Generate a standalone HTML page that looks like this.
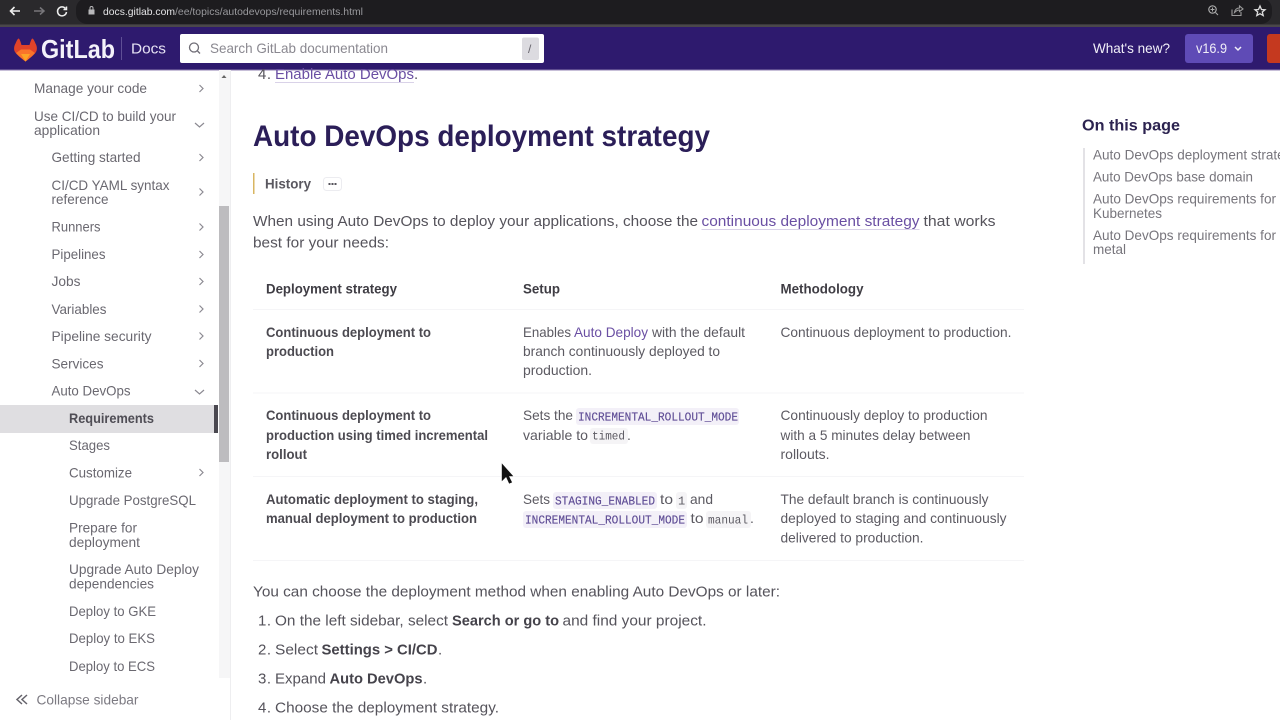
<!DOCTYPE html>
<html><head><meta charset="utf-8"><title>Auto DevOps requirements</title>
<style>
html,body{margin:0;padding:0;width:1280px;height:720px;overflow:hidden;background:#fff}
svg{display:block;filter:blur(.25px)}
text{font-family:"Liberation Sans",sans-serif;font-size:14px;fill:#5c5a62}
.s{font-size:14px;fill:#6a6870}
.b{font-size:15px;fill:#55535b}
.t{font-size:14px;fill:#5c5a62}
.th{font-size:14px;font-weight:bold;fill:#3f3d44}
.tb{font-size:14px;font-weight:bold;fill:#4c4a51}
.l{fill:#6a4fa3}
.c{font-family:"Liberation Mono",monospace;font-size:12px;fill:#5f4d96;stroke:#5f4d96;stroke-width:.15}
.g{font-family:"Liberation Mono",monospace;font-size:12px;fill:#5c5a62}
.toc{font-size:13.6px;fill:#77757c}
.ch{fill:none;stroke:#8c8a92;stroke-width:1.2}
</style></head><body>
<svg width="1280" height="720" viewBox="0 0 1280 720" xmlns="http://www.w3.org/2000/svg">
<rect width="1280" height="720" fill="#fff"/>
<!-- browser bar -->
<rect width="1280" height="27" fill="#2a292c"/>
<rect x="76" y="-2" width="1196" height="26" rx="11" fill="#1d1c1f"/>
<rect y="24.500" width="1280" height="2.500" fill="#4a474a"/>
<path d="M20 11H11M14.500 7L10.500 11L14.500 15" fill="none" stroke="#eee" stroke-width="1.600"/>
<path d="M34 11H44M40 7.500L44 11L40 14.500" fill="none" stroke="#77767a" stroke-width="1.500"/>
<path d="M65.500 8.500A4.500 4.500 0 1 0 66.500 12M66.500 6.500V9.500H63.500" fill="none" stroke="#eee" stroke-width="1.500"/>
<rect x="88.500" y="9.500" width="6" height="5" fill="#b8b8ba"/><path d="M90 9.500V8a1.500 1.500 0 0 1 3 0V9.500" fill="none" stroke="#b8b8ba"/>
<text x="103" y="15" style="font-size:10.500px;fill:#e4e4e6" textLength="72" lengthAdjust="spacingAndGlyphs">docs.gitlab.com</text>
<text x="175" y="15" style="font-size:10.500px;fill:#98989c" textLength="188" lengthAdjust="spacingAndGlyphs">/ee/topics/autodevops/requirements.html</text>
<circle cx="1212.500" cy="9.500" r="3.700" fill="none" stroke="#aaa" stroke-width="1.200"/><path d="M1215.500 12.500L1218 15M1210.500 9.500h4M1212.500 7.500v4" fill="none" stroke="#aaa"/>
<path d="M1232 9.500V15.500H1241V12M1234.500 12.500C1235 9.500 1237 8 1239.500 8V6L1243 9L1239.500 11.500V10C1237.500 10 1236 11 1234.500 12.500Z" fill="none" stroke="#999" stroke-width="1.100"/>
<path d="M1260 6L1261.500 9.500L1265 9.800L1262.300 12L1263.200 15.500L1260 13.700L1256.800 15.500L1257.700 12L1255 9.800L1258.500 9.500Z" fill="none" stroke="#ddd" stroke-width="1.300"/>
<!-- nav -->
<rect y="27" width="1280" height="43" fill="#2e1a6e"/>
<rect y="69.500" width="1280" height="1" fill="#8f7fb0"/>
<path d="M25.500 61.500C21 58 17 55 15 52C13.500 49.500 14 46 15.500 43.500C16.500 41 17.500 39 18.500 38.500C19.500 38.500 20.500 41.500 21.500 45H29.500C30.500 41.500 31.500 38.500 32.500 38.500C33.500 39 34.500 41 35.500 43.500C37 46 37.500 49.500 36 52C34 55 30 58 25.500 61.500Z" fill="#e24329"/>
<path d="M25.500 61.500C21 58 18 55.500 16 53L21 49.500H30L35 53C33 55.500 30 58 25.500 61.500Z" fill="#f9742a"/>
<path d="M25.500 61.500L21 54H30Z" fill="#fca326"/>
<text x="41" y="58" style="font-size:26px;fill:#f4f2fa;font-weight:bold" textLength="74" lengthAdjust="spacingAndGlyphs">GitLab</text>
<rect x="121" y="37" width="1" height="23" fill="#5f4f95"/>
<text x="131" y="53.500" style="font-size:14.500px;fill:#e6e2f4" textLength="35" lengthAdjust="spacingAndGlyphs">Docs</text>
<rect x="180" y="34" width="364" height="29" rx="2" fill="#fff"/>
<circle cx="194" cy="47.500" r="4.500" fill="none" stroke="#6e6c75" stroke-width="1.300"/><path d="M197.500 51L200 53.500" stroke="#6e6c75" stroke-width="1.300"/>
<text x="210" y="53" style="font-size:14px;fill:#8a8890" textLength="178" lengthAdjust="spacingAndGlyphs">Search GitLab documentation</text>
<rect x="522" y="37.500" width="17" height="22.500" rx="2" fill="#dcdbe0"/>
<text x="528" y="53" style="font-size:12px;fill:#66646c">/</text>
<text x="1093" y="53" style="font-size:14px;fill:#f1eff8" textLength="77" lengthAdjust="spacingAndGlyphs">What's new?</text>
<rect x="1185" y="34" width="68" height="29" rx="3" fill="#5f4bb6"/>
<text x="1196" y="53" style="font-size:14px;fill:#f1eff8" textLength="31" lengthAdjust="spacingAndGlyphs">v16.9</text>
<path d="M1235 47l3 3 3-3" fill="none" stroke="#f1eff8" stroke-width="1.500"/>
<rect x="1267" y="34" width="20" height="29" rx="3" fill="#c5391f"/>
<!-- sidebar -->
<rect x="230" y="70" width="1" height="650" fill="#eeeef0"/>
<rect x="219" y="70" width="11" height="608" fill="#f6f6f7"/>
<rect x="219" y="206" width="10" height="256" fill="#bdbcbf"/>
<path d="M224 75l-2.500 3h5z" fill="#666"/>
<rect y="405" width="218" height="28" fill="#dfdee1"/>
<rect x="214" y="405" width="4" height="28" fill="#4a4850"/>
<text class="s" x="34" y="93" textLength="113" lengthAdjust="spacingAndGlyphs">Manage your code</text>
<text class="s" x="34" y="121" textLength="142" lengthAdjust="spacingAndGlyphs">Use CI/CD to build your</text>
<text class="s" x="34" y="135" textLength="66" lengthAdjust="spacingAndGlyphs">application</text>
<text class="s" x="51.500" y="162" textLength="89" lengthAdjust="spacingAndGlyphs">Getting started</text>
<text class="s" x="51.500" y="190" textLength="118" lengthAdjust="spacingAndGlyphs">CI/CD YAML syntax</text>
<text class="s" x="51.500" y="204" textLength="57" lengthAdjust="spacingAndGlyphs">reference</text>
<text class="s" x="51.500" y="231.500" textLength="49" lengthAdjust="spacingAndGlyphs">Runners</text>
<text class="s" x="51.500" y="259" textLength="54" lengthAdjust="spacingAndGlyphs">Pipelines</text>
<text class="s" x="51.500" y="286" textLength="29" lengthAdjust="spacingAndGlyphs">Jobs</text>
<text class="s" x="51.500" y="314" textLength="55" lengthAdjust="spacingAndGlyphs">Variables</text>
<text class="s" x="51.500" y="341" textLength="100" lengthAdjust="spacingAndGlyphs">Pipeline security</text>
<text class="s" x="51.500" y="368.500" textLength="52" lengthAdjust="spacingAndGlyphs">Services</text>
<text class="s" x="51.500" y="395.500" textLength="79" lengthAdjust="spacingAndGlyphs">Auto DevOps</text>
<text class="s" x="69" y="423" style="font-weight:bold;fill:#4f4d55" textLength="85" lengthAdjust="spacingAndGlyphs">Requirements</text>
<text class="s" x="69" y="450" textLength="41" lengthAdjust="spacingAndGlyphs">Stages</text>
<text class="s" x="69" y="477.500" textLength="63" lengthAdjust="spacingAndGlyphs">Customize</text>
<text class="s" x="69" y="505" textLength="127" lengthAdjust="spacingAndGlyphs">Upgrade PostgreSQL</text>
<text class="s" x="69" y="532.500" textLength="68" lengthAdjust="spacingAndGlyphs">Prepare for</text>
<text class="s" x="69" y="547" textLength="71" lengthAdjust="spacingAndGlyphs">deployment</text>
<text class="s" x="69" y="574" textLength="130" lengthAdjust="spacingAndGlyphs">Upgrade Auto Deploy</text>
<text class="s" x="69" y="588.500" textLength="85" lengthAdjust="spacingAndGlyphs">dependencies</text>
<text class="s" x="69" y="616" textLength="87" lengthAdjust="spacingAndGlyphs">Deploy to GKE</text>
<text class="s" x="69" y="643" textLength="86" lengthAdjust="spacingAndGlyphs">Deploy to EKS</text>
<text class="s" x="69" y="671" textLength="86" lengthAdjust="spacingAndGlyphs">Deploy to ECS</text>
<path class="ch" d="M199.500 85l3.500 3.500-3.500 3.500M199.500 154l3.500 3.500-3.500 3.500M199.500 188.500l3.500 3.500-3.500 3.500M199.500 223.500l3.500 3.500-3.500 3.500M199.500 251l3.500 3.500-3.500 3.500M199.500 278l3.500 3.500-3.500 3.500M199.500 305.500l3.500 3.500-3.500 3.500M199.500 332.500l3.500 3.500-3.500 3.500M199.500 360l3.500 3.500-3.500 3.500M199.500 469l3.500 3.500-3.500 3.500"/>
<path class="ch" d="M195 123l4.500 4 4.500-4M195 390l4.500 4 4.500-4"/>
<path d="M22 695l-5 4.500 5 4.500M27 695l-5 4.500 5 4.500" fill="none" stroke="#66646c" stroke-width="1.500"/>
<text x="36.500" y="704.500" style="font-size:14px;fill:#7c7a82" textLength="102" lengthAdjust="spacingAndGlyphs">Collapse sidebar</text>
<!-- main -->
<text class="b" x="258" y="79" textLength="13">4.</text>
<text class="b l" x="275" y="79" textLength="139" lengthAdjust="spacingAndGlyphs">Enable Auto DevOps</text>
<rect x="275" y="82" width="139" height="1" fill="#d9d2e8"/>
<text class="b" x="414" y="79">.</text>
<text x="253" y="146" style="font-size:30px;font-weight:bold;fill:#2b1e58" textLength="457" lengthAdjust="spacingAndGlyphs">Auto DevOps deployment strategy</text>
<rect x="253" y="173" width="1.500" height="21" fill="#d8b662"/>
<text x="265" y="188.500" style="font-size:14px;font-weight:bold;fill:#5a5860" textLength="46" lengthAdjust="spacingAndGlyphs">History</text>
<rect x="323.500" y="177.500" width="18" height="13" rx="3" fill="#fff" stroke="#ececf0"/>
<path d="M328.500 184h8" stroke="#55535b" stroke-width="2" stroke-dasharray="2 1"/>
<text class="b" x="253" y="226" textLength="445" lengthAdjust="spacingAndGlyphs">When using Auto DevOps to deploy your applications, choose the</text>
<text class="b l" x="701.500" y="226" textLength="218" lengthAdjust="spacingAndGlyphs">continuous deployment strategy</text>
<rect x="701.500" y="229" width="218" height="1" fill="#d9d2e8"/>
<text class="b" x="923.500" y="226" textLength="72" lengthAdjust="spacingAndGlyphs">that works</text>
<text class="b" x="253" y="247.500" textLength="136" lengthAdjust="spacingAndGlyphs">best for your needs:</text>
<!-- table -->
<path d="M253 309.500H1024M253 393H1024M253 476.500H1024M253 560.500H1024" stroke="#f5f5f7"/>
<text class="th" x="266" y="293.500" textLength="131" lengthAdjust="spacingAndGlyphs">Deployment strategy</text>
<text class="th" x="523" y="293.500" textLength="37" lengthAdjust="spacingAndGlyphs">Setup</text>
<text class="th" x="780.500" y="293.500" textLength="83" lengthAdjust="spacingAndGlyphs">Methodology</text>
<text class="tb" x="266" y="337" textLength="165" lengthAdjust="spacingAndGlyphs">Continuous deployment to</text>
<text class="tb" x="266" y="356" textLength="68" lengthAdjust="spacingAndGlyphs">production</text>
<text class="t" x="523" y="337" textLength="48" lengthAdjust="spacingAndGlyphs">Enables</text>
<text class="t l" x="574" y="337" textLength="74" lengthAdjust="spacingAndGlyphs">Auto Deploy</text>
<text class="t" x="652" y="337" textLength="93" lengthAdjust="spacingAndGlyphs">with the default</text>
<text class="t" x="523" y="356" textLength="197" lengthAdjust="spacingAndGlyphs">branch continuously deployed to</text>
<text class="t" x="523" y="375" textLength="69" lengthAdjust="spacingAndGlyphs">production.</text>
<text class="t" x="780.500" y="337" textLength="231" lengthAdjust="spacingAndGlyphs">Continuous deployment to production.</text>
<text class="tb" x="266" y="420" textLength="165" lengthAdjust="spacingAndGlyphs">Continuous deployment to</text>
<text class="tb" x="266" y="440" textLength="222" lengthAdjust="spacingAndGlyphs">production using timed incremental</text>
<text class="tb" x="266" y="459" textLength="41" lengthAdjust="spacingAndGlyphs">rollout</text>
<text class="t" x="523" y="420" textLength="50" lengthAdjust="spacingAndGlyphs">Sets the</text>
<rect x="576" y="408" width="163" height="17" rx="3" fill="#f3f0f8"/>
<text class="c" x="578" y="420.500" textLength="160" lengthAdjust="spacingAndGlyphs">INCREMENTAL_ROLLOUT_MODE</text>
<text class="t" x="523" y="440" textLength="65" lengthAdjust="spacingAndGlyphs">variable to</text>
<rect x="590" y="428" width="38" height="16" rx="3" fill="#f5f4f6"/>
<text class="g" x="592" y="439.500" textLength="33" lengthAdjust="spacingAndGlyphs">timed</text>
<text class="t" x="627" y="440">.</text>
<text class="t" x="780.500" y="420" textLength="207" lengthAdjust="spacingAndGlyphs">Continuously deploy to production</text>
<text class="t" x="780.500" y="440" textLength="190" lengthAdjust="spacingAndGlyphs">with a 5 minutes delay between</text>
<text class="t" x="780.500" y="459" textLength="49" lengthAdjust="spacingAndGlyphs">rollouts.</text>
<text class="tb" x="266" y="504" textLength="212" lengthAdjust="spacingAndGlyphs">Automatic deployment to staging,</text>
<text class="tb" x="266" y="523" textLength="211" lengthAdjust="spacingAndGlyphs">manual deployment to production</text>
<text class="t" x="523" y="504" textLength="27" lengthAdjust="spacingAndGlyphs">Sets</text>
<rect x="553" y="492" width="104" height="17" rx="3" fill="#f3f0f8"/>
<text class="c" x="555" y="504.500" textLength="100" lengthAdjust="spacingAndGlyphs">STAGING_ENABLED</text>
<text class="t" x="660" y="504" textLength="13" lengthAdjust="spacingAndGlyphs">to</text>
<rect x="676" y="492" width="11" height="17" rx="3" fill="#f5f4f6"/>
<text class="g" x="678" y="504.500">1</text>
<text class="t" x="690" y="504" textLength="23" lengthAdjust="spacingAndGlyphs">and</text>
<rect x="523" y="511" width="164" height="17" rx="3" fill="#f3f0f8"/>
<text class="c" x="525" y="523.500" textLength="160" lengthAdjust="spacingAndGlyphs">INCREMENTAL_ROLLOUT_MODE</text>
<text class="t" x="690.500" y="523" textLength="13" lengthAdjust="spacingAndGlyphs">to</text>
<rect x="706" y="511" width="45" height="17" rx="3" fill="#f5f4f6"/>
<text class="g" x="708" y="523.500" textLength="40" lengthAdjust="spacingAndGlyphs">manual</text>
<text class="t" x="750" y="523">.</text>
<text class="t" x="780.500" y="504" textLength="208" lengthAdjust="spacingAndGlyphs">The default branch is continuously</text>
<text class="t" x="780.500" y="523" textLength="226" lengthAdjust="spacingAndGlyphs">deployed to staging and continuously</text>
<text class="t" x="780.500" y="542.500" textLength="143" lengthAdjust="spacingAndGlyphs">delivered to production.</text>
<!-- after table -->
<text class="b" x="253" y="596.500" textLength="527" lengthAdjust="spacingAndGlyphs">You can choose the deployment method when enabling Auto DevOps or later:</text>
<text class="b" x="258" y="625.500" textLength="13">1.</text>
<text class="b" x="275" y="625.500" textLength="173" lengthAdjust="spacingAndGlyphs">On the left sidebar, select</text>
<text class="b" x="452" y="625.500" style="font-weight:bold;fill:#45434b" textLength="107" lengthAdjust="spacingAndGlyphs">Search or go to</text>
<text class="b" x="562.500" y="625.500" textLength="144" lengthAdjust="spacingAndGlyphs">and find your project.</text>
<text class="b" x="258" y="654.500" textLength="13">2.</text>
<text class="b" x="275" y="654.500" textLength="43" lengthAdjust="spacingAndGlyphs">Select</text>
<text class="b" x="321.500" y="654.500" style="font-weight:bold;fill:#45434b" textLength="116" lengthAdjust="spacingAndGlyphs">Settings &gt; CI/CD</text>
<text class="b" x="438" y="654.500">.</text>
<text class="b" x="258" y="683.500" textLength="13">3.</text>
<text class="b" x="275" y="683.500" textLength="51" lengthAdjust="spacingAndGlyphs">Expand</text>
<text class="b" x="329.500" y="683.500" style="font-weight:bold;fill:#45434b" textLength="93" lengthAdjust="spacingAndGlyphs">Auto DevOps</text>
<text class="b" x="423" y="683.500">.</text>
<text class="b" x="258" y="712.500" textLength="13">4.</text>
<text class="b" x="275" y="712.500" textLength="224" lengthAdjust="spacingAndGlyphs">Choose the deployment strategy.</text>
<!-- toc -->
<text x="1082" y="130.500" style="font-size:16px;font-weight:bold;fill:#2c2350" textLength="98" lengthAdjust="spacingAndGlyphs">On this page</text>
<rect x="1083" y="148" width="2" height="116" fill="#e3e2e6"/>
<text class="toc" x="1093" y="159.500" textLength="206" lengthAdjust="spacingAndGlyphs">Auto DevOps deployment strategy</text>
<text class="toc" x="1093" y="181.500" textLength="160" lengthAdjust="spacingAndGlyphs">Auto DevOps base domain</text>
<text class="toc" x="1093" y="203.500" textLength="183" lengthAdjust="spacingAndGlyphs">Auto DevOps requirements for</text>
<text class="toc" x="1093" y="218" textLength="69" lengthAdjust="spacingAndGlyphs">Kubernetes</text>
<text class="toc" x="1093" y="240" textLength="183" lengthAdjust="spacingAndGlyphs">Auto DevOps requirements for</text>
<text class="toc" x="1093" y="254" textLength="33" lengthAdjust="spacingAndGlyphs">metal</text>
<!-- cursor -->
<path d="M501.500 462.500V482L506 477.500L509 484L512.500 482.500L509.500 476.500H514Z" fill="#111" stroke="#fff" stroke-width=".6"/>
</svg>
</body></html>
